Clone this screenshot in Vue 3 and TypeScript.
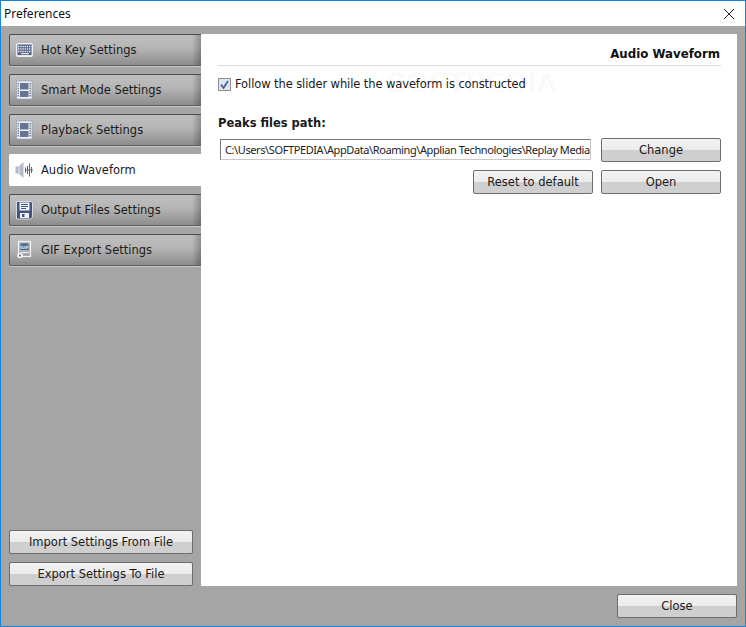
<script setup lang="ts">
const tabs = [
  { label: 'Hot Key Settings', icon: 'key' },
  { label: 'Smart Mode Settings', icon: 'film' },
  { label: 'Playback Settings', icon: 'film' },
  { label: 'Audio Waveform', icon: 'audio', active: true },
  { label: 'Output Files Settings', icon: 'disk' },
  { label: 'GIF Export Settings', icon: 'gif' },
]
</script>

<template>
  <div class="window">
    <header class="titlebar">
      <span>Preferences</span>
      <svg class="close-x" width="12" height="12" viewBox="0 0 12 12">
        <path d="M1 1L11 11M11 1L1 11" stroke="#222" stroke-width="1" fill="none" />
      </svg>
    </header>
    <div class="body">
      <div class="main">
        <aside class="sidebar">
          <nav class="tabs">
            <div v-for="t in tabs" :key="t.label" class="tab" :class="{ active: t.active }">
              <svg class="icon" width="20" height="20" viewBox="0 0 20 20">
                <g v-if="t.icon === 'key'">
                  <rect x="2.5" y="3.5" width="16" height="13" rx="1" fill="#dfe4ee" stroke="#eef0f5" />
                  <rect x="3.5" y="4.5" width="14" height="10.5" fill="#4f5f80" />
                  <path d="M4 6.5h13M4 9h13M4 11.5h13" stroke="#e6eaf2" stroke-width="1.3" stroke-dasharray="1.4 .8" />
                  <path d="M7 13.7h8" stroke="#e6eaf2" stroke-width="1.2" />
                </g>
                <g v-else-if="t.icon === 'film'">
                  <rect x="2.5" y="1" width="15.5" height="18" fill="#eef1f6" stroke="#8a96ae" stroke-width="0.6" />
                  <rect x="6" y="3" width="8.5" height="6.5" fill="#66758f" />
                  <rect x="6" y="11" width="8.5" height="6" fill="#66758f" />
                  <path d="M4.2 3v14M16.2 3v14" stroke="#66758f" stroke-width="1.4" stroke-dasharray="1.4 1" />
                </g>
                <g v-else-if="t.icon === 'audio'">
                  <path d="M1.5 6.5h3l5-4.5v16l-5-4.5h-3z" fill="#b4bccb" />
                  <path d="M5 6.5v7" stroke="#dfe3ea" stroke-width="1" />
                  <path d="M11.5 7.5v5M13.5 6v8M15.5 3.5v13M17.5 7v6M11 10h8" stroke="#56658a" stroke-width="1" />
                </g>
                <g v-else-if="t.icon === 'disk'">
                  <path d="M2.5 1.5h14.5l1.5 1.5v14l-2 2H2.5z" fill="#3f5585" stroke="#eef1f6" stroke-width="0.8" />
                  <rect x="5.5" y="2.5" width="10" height="8" fill="#f2f4f8" />
                  <path d="M7 4.5h7M7 6.5h7M7 8.5h5" stroke="#3f5585" />
                  <rect x="6" y="13" width="9" height="5" fill="#f2f4f8" />
                  <rect x="8" y="14" width="2.5" height="3" fill="#3f5585" />
                </g>
                <g v-else>
                  <rect x="4.5" y="1.5" width="12" height="15" fill="none" stroke="#eef1f6" stroke-width="1.2" />
                  <rect x="6.5" y="3.5" width="8" height="6.5" fill="#4d5f82" />
                  <text x="10.5" y="9" text-anchor="middle" class="gif-text">GIF</text>
                  <path d="M7 12.5h8" stroke="#eef1f6" />
                  <circle cx="6" cy="15.5" r="2.8" fill="#eef1f6" />
                  <circle cx="6" cy="15.5" r="1" fill="#4d5f82" />
                </g>
              </svg>
              <span>{{ t.label }}</span>
            </div>
          </nav>
          <div class="side-actions">
            <button class="btn">Import Settings From File</button>
            <button class="btn">Export Settings To File</button>
          </div>
        </aside>
        <section class="content">
          <h2 class="heading">Audio Waveform</h2>
          <label class="check-row">
            <span class="check">
              <svg width="9" height="9" viewBox="0 0 9 9">
                <path d="M1 4.5L3.5 8L8 1" stroke="#4a5fa8" stroke-width="1.8" fill="none" />
              </svg>
            </span>
            <span class="check-text">Follow the slider while the waveform is constructed</span>
          </label>
          <div class="watermark">SOFTPEDIA</div>
          <div class="peaks-label">Peaks files path:</div>
          <div class="path-grid">
            <div class="path-input">C:\Users\SOFTPEDIA\AppData\Roaming\Applian Technologies\Replay Media</div>
            <button class="btn">Change</button>
            <button class="btn reset">Reset to default</button>
            <button class="btn">Open</button>
          </div>
        </section>
      </div>
      <footer class="footer">
        <button class="btn close">Close</button>
      </footer>
    </div>
  </div>
</template>

<style>
html, body { margin: 0; padding: 0; background: #a5a5a5; }
</style>

<style scoped>
.window {
  width: 746px;
  height: 627px;
  box-sizing: border-box;
  border: 1px solid #1883d7;
  display: flex;
  flex-direction: column;
  font-family: "DejaVu Sans", Verdana, sans-serif;
  font-size: 11.5px;
  color: #1a1a1a;
  overflow: hidden;
}
.titlebar {
  height: 25px;
  flex: none;
  background: #fff;
  display: flex;
  align-items: center;
  justify-content: space-between;
  padding: 0 10px 0 3px;
  font-family: "Noto Sans", "Liberation Sans", sans-serif;
  font-size: 12px;
  color: #111;
}
.body {
  flex: 1;
  background: #a5a5a5;
  display: flex;
  flex-direction: column;
}
.main {
  height: 552px;
  margin-top: 8px;
  display: flex;
  flex: none;
}
.sidebar {
  width: 192px;
  margin-left: 8px;
  display: flex;
  flex-direction: column;
  justify-content: space-between;
  flex: none;
}
.tabs {
  display: flex;
  flex-direction: column;
  gap: 8px;
}
.tab {
  height: 32px;
  box-sizing: border-box;
  display: flex;
  align-items: center;
  gap: 7px;
  padding: 0 0 0 4px;
  border: 1px solid #4e4e4e;
  border-right: none;
  border-bottom-color: #5c5c5c;
  border-radius: 2px 0 0 2px;
  background:
    linear-gradient(90deg, rgba(0,0,0,0) 0, rgba(0,0,0,0) 182px, rgba(0,0,0,.28) 192px),
    linear-gradient(#c0c0c0, #b4b4b4 45%, #8d8d8d);
  box-shadow: 0 1px 0 #c8c8c8;
}
.tab.active {
  background: #fff;
  border-color: #fff;
  box-shadow: none;
}
.icon { flex: none; }
.gif-text {
  font-family: "DejaVu Sans", sans-serif;
  font-size: 4.5px;
  font-weight: 700;
  fill: #eef1f6;
}
.side-actions {
  display: flex;
  flex-direction: column;
  gap: 8px;
  width: 184px;
}
.btn {
  height: 24px;
  box-sizing: border-box;
  padding: 0;
  border: 1px solid #6e6e6e;
  border-radius: 2px;
  background: linear-gradient(#f2f2f2 0, #ececec 50%, #cfcfcf 52%, #cfcfcf 100%);
  font-family: inherit;
  font-size: 11.5px;
  color: #1a1a1a;
}
.content {
  position: relative;
  flex: 1;
  margin-right: 8px;
  background: #fff;
  padding: 0 16px 0 17px;
  box-sizing: border-box;
}
.heading {
  margin: 0;
  height: 32px;
  box-sizing: border-box;
  text-align: right;
  font-size: 11.8px;
  font-weight: 700;
  line-height: 17px;
  padding: 12px 1px 0 0;
  border-bottom: 1px solid #dcdcdc;
  color: #111;
}
.check-row {
  position: relative;
  z-index: 1;
  display: flex;
  align-items: center;
  gap: 4px;
  margin-top: 10px;
  height: 16px;
}
.check-text { letter-spacing: -0.1px; }
.check {
  width: 13px;
  height: 13px;
  box-sizing: border-box;
  border: 1px solid #8e8f8f;
  background: #dfe6f2;
  display: flex;
  align-items: center;
  justify-content: center;
}
.watermark {
  position: absolute;
  left: 186px;
  top: 34px;
  font-size: 27px;
  letter-spacing: 2px;
  color: #fcfcfc;
  text-shadow: 0 0 1px #e2e2e2;
  font-family: "Liberation Sans", sans-serif;
  pointer-events: none;
  z-index: 0;
}
.peaks-label {
  position: relative;
  font-weight: 700;
  margin-top: 23px;
  line-height: 16px;
  height: 16px;
}
.path-grid {
  display: grid;
  grid-template-columns: 371px 120px;
  column-gap: 10px;
  row-gap: 8px;
  margin-top: 7px;
  margin-left: 2px;
}
.path-input {
  height: 21px;
  box-sizing: border-box;
  margin-top: 1px;
  border: 1px solid #c8c8c8;
  border-top-color: #777;
  border-left-color: #777;
  padding: 0 0 0 4px;
  font-family: "Noto Sans", "Liberation Sans", sans-serif;
  font-size: 11px;
  letter-spacing: -0.4px;
  line-height: 19px;
  white-space: nowrap;
  overflow: hidden;
  color: #222;
}
.reset {
  width: 120px;
  justify-self: end;
  margin-right: -2px;
}
.footer {
  flex: 1;
  display: flex;
  justify-content: flex-end;
  padding: 8px 8px 0 0;
}
.close {
  width: 120px;
  height: 24px;
}
</style>
